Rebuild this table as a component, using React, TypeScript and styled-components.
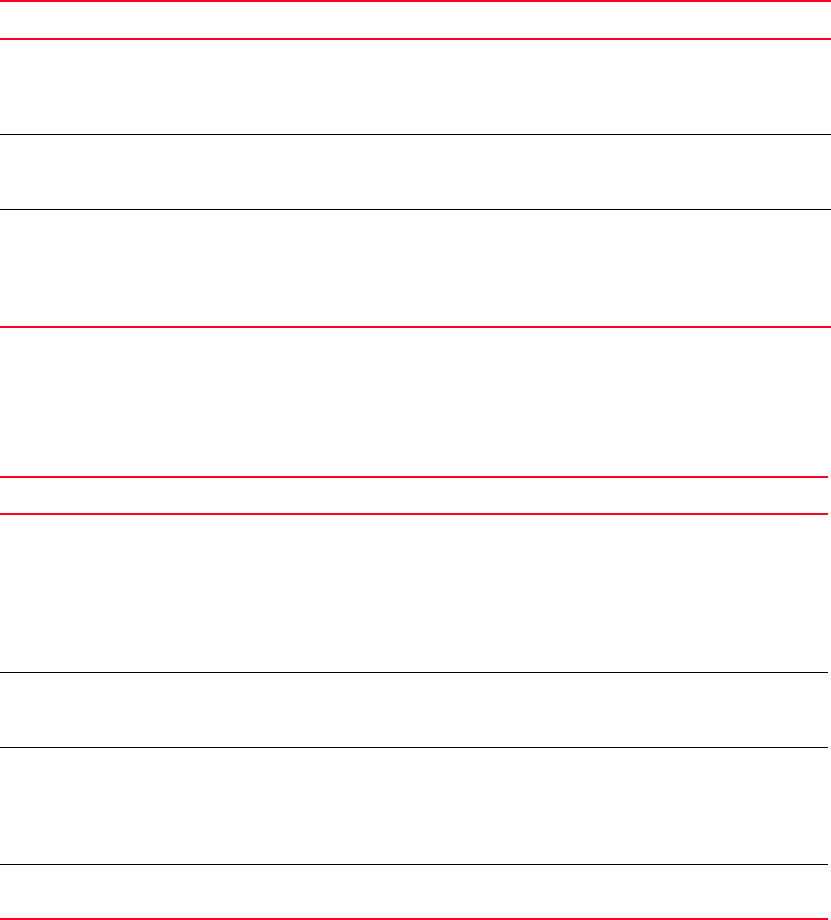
import styled, { createGlobalStyle } from 'styled-components';

const GlobalStyle = createGlobalStyle`
    html, body {
        margin: 0;
        padding: 0;
        background: #ffffff;
        font-family: "Liberation Sans", Arial, sans-serif;
    }
`;

const Page = styled.div`
    display: flex;
    flex-direction: column;
    gap: 148px;
    background: #ffffff;
`;

const Table = styled.div<{ $width: number }>`
    width: ${(p) => p.$width}px;
    border-top: 2px solid #ff0022;
    border-bottom: 2px solid #ff0022;
    display: flex;
    flex-direction: column;
`;

const Head = styled.div<{ $height: number }>`
    height: ${(p) => p.$height}px;
    border-bottom: 2px solid #ff0022;
    color: #ffffff;
`;

const Row = styled.div<{ $height: number; $last?: boolean }>`
    height: ${(p) => p.$height}px;
    border-bottom: ${(p) => (p.$last ? 'none' : '1px solid #000000')};
`;

const App = () => {
    return (
        <>
            <GlobalStyle />
            <Page>
                <Table $width={831}>
                    <Head $height={36} />
                    <Row $height={94} />
                    <Row $height={74} />
                    <Row $height={116} $last />
                </Table>
                <Table $width={828}>
                    <Head $height={35} />
                    <Row $height={157} />
                    <Row $height={74} />
                    <Row $height={116} />
                    <Row $height={53} $last />
                </Table>
            </Page>
        </>
    );
};

export default App;
